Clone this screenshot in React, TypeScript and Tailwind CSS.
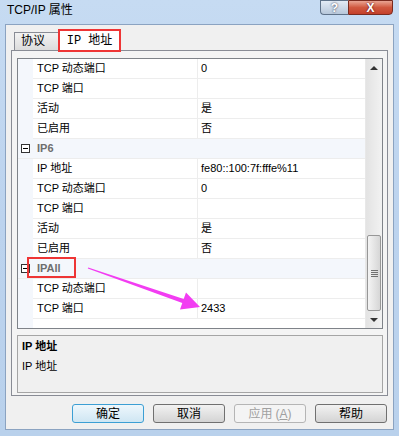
import React from "react";

type Row = { name: string; value?: string; cat?: boolean };

const rows: Row[] = [
  { name: "TCP 动态端口", value: "0" },
  { name: "TCP 端口", value: "" },
  { name: "活动", value: "是" },
  { name: "已启用", value: "否" },
  { name: "IP6", cat: true },
  { name: "IP 地址", value: "fe80::100:7f:fffe%11" },
  { name: "TCP 动态端口", value: "0" },
  { name: "TCP 端口", value: "" },
  { name: "活动", value: "是" },
  { name: "已启用", value: "否" },
  { name: "IPAll", cat: true },
  { name: "TCP 动态端口", value: "" },
  { name: "TCP 端口", value: "2433" },
];

const buttons = [
  { label: "确定", primary: true },
  { label: "取消" },
  { label: "应用", disabled: true },
  { label: "帮助" },
];

const font = { fontFamily: '"Liberation Sans", "Noto Sans CJK SC", sans-serif' };

const ExpandBox = () => (
  <div className="ml-[3px] w-[9px] h-[9px] border border-[#333] bg-white flex items-center justify-center">
    <div className="w-[5px] h-px bg-black" />
  </div>
);

const Scrollbar = () => (
  <div className="w-[17px] flex flex-col bg-gradient-to-r from-[#e3e3e3] to-[#f2f2f2] border-l border-[#e8e8e8]">
    <div className="h-[17px] flex items-center justify-center">
      <div className="w-0 h-0 border-l-[4px] border-r-[4px] border-b-[4px] border-l-transparent border-r-transparent border-b-[#333]" />
    </div>
    <div className="h-[159px]" />
    <div className="mx-px h-[76px] rounded-[2px] border border-[#979797] bg-gradient-to-r from-[#f4f4f4] to-[#d6d6d6] flex flex-col items-center justify-center gap-px">
      <div className="w-[7px] h-px bg-[#707070]" />
      <div className="w-[7px] h-px bg-[#707070]" />
      <div className="w-[7px] h-px bg-[#707070]" />
      <div className="w-[7px] h-px bg-[#707070]" />
    </div>
    <div className="flex-1" />
    <div className="h-[17px] flex items-center justify-center">
      <div className="w-0 h-0 border-l-[4px] border-r-[4px] border-t-[4px] border-l-transparent border-r-transparent border-t-[#333]" />
    </div>
  </div>
);

const GridRow = ({ row }: { row: Row }) => {
  if (row.cat) {
    return (
      <div className="flex h-[20px] bg-[#f4f7fc] border-b border-[#ededed] items-center">
        <div className="w-[15px] flex items-center">
          <ExpandBox />
        </div>
        <div className="pl-[4px] font-bold text-[#6e6e6e]">{row.name}</div>
      </div>
    );
  }
  return (
    <div className="flex h-[20px]">
      <div className="w-[15px] bg-[#f4f7fc]" />
      <div className="w-[165px] pl-[4px] flex items-center border-b border-r border-[#ededed] bg-white text-black">
        {row.name}
      </div>
      <div className="flex-1 pl-[3px] flex items-center border-b border-[#ededed] bg-white text-black">
        {row.value}
      </div>
    </div>
  );
};

export default function App() {
  return (
    <div
      className="relative w-[399px] h-[436px] overflow-hidden bg-gradient-to-b from-[#c6dbf2] via-[#bcd3ee] to-[#b9d1ec] flex flex-col text-[11px]"
      style={font}
    >
      {/* title bar */}
      <div className="h-[24px] flex items-start">
        <div className="pl-[7px] pt-[2px] text-[12px] leading-[16px] text-black">TCP/IP 属性</div>
        <div className="ml-auto mr-[6px] flex h-[15px]">
          <div className="w-[28px] rounded-bl-[4px] border border-[#5f7289] border-r-0 bg-gradient-to-b from-[#e3ebf5] to-[#b7c7da] flex items-center justify-center text-white font-bold text-[12px] leading-none [text-shadow:0_0_2px_#223]">
            ?
          </div>
          <div className="w-[45px] rounded-br-[4px] border border-[#7a2b1f] bg-gradient-to-b from-[#e9a493] via-[#d0583f] to-[#c4402b] flex items-center justify-center text-white font-bold text-[12px] leading-none [text-shadow:0_0_2px_#401]">
            X
          </div>
        </div>
      </div>

      {/* client area */}
      <div className="mx-[5px] h-[406px] border border-[#8ba3c1] bg-[#f0f0f0] flex flex-col px-[5px]">
        {/* tabs */}
        <div className="h-[25px] flex items-end pl-[3px]">
          <div className="w-[44px] h-[18px] border-t border-l border-[#898c95] bg-gradient-to-b from-[#f3f3f3] to-[#dcdcdc] pl-[6px] text-[12px] leading-[17px] text-black">
            协议
          </div>
          <div
            className="relative z-10 -mb-[2px] w-[63px] h-[23px] border-2 border-[#ee3535] bg-white flex items-center justify-center text-[12px] text-black"
            style={{ fontFamily: '"Liberation Mono", "Noto Sans CJK SC", monospace' }}
          >
            IP 地址
          </div>
        </div>

        {/* tab panel */}
        <div className="h-[346px] border border-[#898c95] bg-[#f4f4f4] pt-[7px] pl-[5px] pr-[4px] pb-[2px] flex flex-col">
          <div className="h-[271px] border border-[#7f8389] flex bg-white">
            <div className="flex-1 flex flex-col">
              {rows.map((r, i) => (
                <GridRow key={i} row={r} />
              ))}
              <div className="flex flex-1">
                <div className="w-[15px] bg-[#f4f7fc]" />
                <div className="flex-1 bg-white" />
              </div>
            </div>
            <Scrollbar />
          </div>
          <div className="mt-[6px] h-[58px] border border-[#a5a5a5] bg-[#f0f0f0] pl-[4px] text-black">
            <div className="leading-[20px] font-bold">IP 地址</div>
            <div className="leading-[20px]">IP 地址</div>
          </div>
        </div>

        {/* buttons */}
        <div className="mt-[8px] flex justify-end gap-[9px] pr-px">
          {buttons.map((b) => (
            <div
              key={b.label}
              className={
                b.primary
                  ? "w-[72px] h-[19px] rounded-[3px] border border-[#3c9fd4] bg-gradient-to-b from-[#eef7fc] to-[#cfe6f3] flex items-center justify-center text-[12px] text-black"
                  : b.disabled
                  ? "w-[72px] h-[19px] rounded-[3px] border border-[#b5b5b5] bg-[#f4f4f4] flex items-center justify-center text-[12px] text-[#a0a0a0]"
                  : "w-[72px] h-[19px] rounded-[3px] border border-[#707070] bg-gradient-to-b from-[#f2f2f2] to-[#d4d4d4] flex items-center justify-center text-[12px] text-black"
              }
            >
              {b.label}
              {b.disabled && (
                <span className="ml-[3px]">
                  (<span className="underline">A</span>)
                </span>
              )}
            </div>
          ))}
        </div>
      </div>

      {/* annotations */}
      <div className="absolute left-[27px] top-[257px] w-[49px] h-[21px] border-2 border-[#ee3535]" />
      <svg className="absolute left-0 top-0" width="399" height="436" viewBox="0 0 399 436">
        <polygon
          points="88.2,267.5 183.7,299.1 186,292.5 200,307 180,309.5 182.3,302.9 87.8,268.5"
          fill="#f23df2"
        />
      </svg>
    </div>
  );
}
